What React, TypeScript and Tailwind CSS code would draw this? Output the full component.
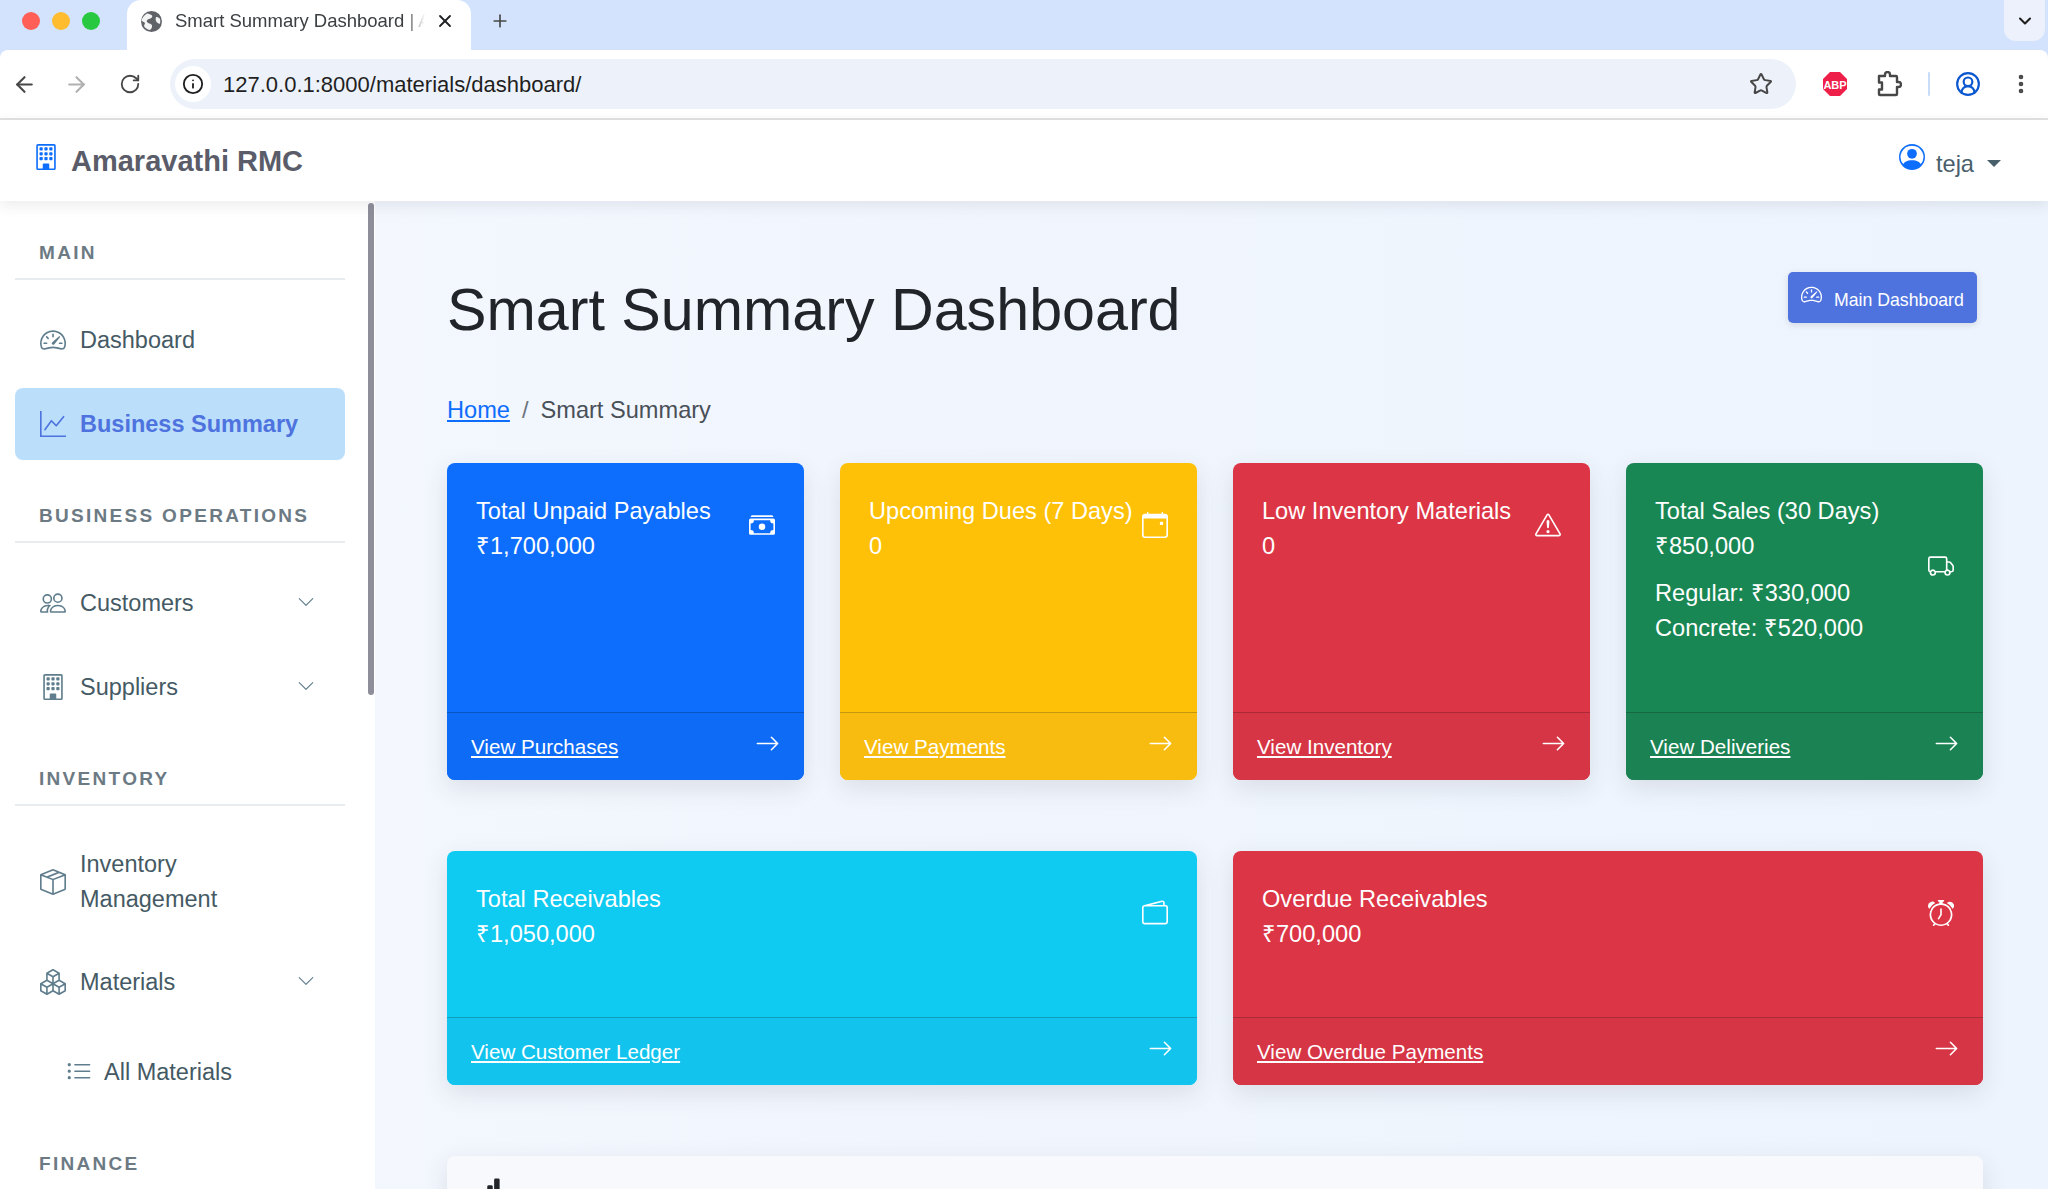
import type { ReactNode } from "react"
import { ArrowLeft, ArrowRight, ChevronDown, CircleUserRound, EllipsisVertical, Info, Plus, RotateCw, Star, X } from "lucide-react"
import {
  BsAlarm,
  BsArrowRight,
  BsBarChartFill,
  BsBoxSeam,
  BsBoxes,
  BsBuilding,
  BsCalendarEvent,
  BsCashStack,
  BsChevronDown,
  BsExclamationTriangle,
  BsGraphUp,
  BsListUl,
  BsPeople,
  BsPersonCircle,
  BsSpeedometer2,
  BsTruck,
  BsWallet2,
} from "react-icons/bs"

function BrowserChrome() {
  return (
    <div className="shrink-0 bg-[#d3e3fd]">
      {/* tab strip */}
      <div className="flex h-[50px] items-start">
        <div className="flex h-[50px] w-[127px] shrink-0 items-center gap-[12px] pb-[8px] pl-[22px]">
          <span className="h-[18px] w-[18px] rounded-full bg-[#ff5f57]" />
          <span className="h-[18px] w-[18px] rounded-full bg-[#febc2e]" />
          <span className="h-[18px] w-[18px] rounded-full bg-[#28c840]" />
        </div>
        <div className="flex h-[50px] w-[344px] shrink-0 items-center rounded-t-[14px] bg-white pb-[8px] pl-[14px] pr-[16px]">
          <svg className="h-[21px] w-[21px] shrink-0" viewBox="0 0 21 21">
            <circle cx="10.5" cy="10.5" r="10.5" fill="#5f6368" />
            <path d="M6 2.500c2 .5 4 .5 5 2s-1 3-3 3.500-3 2-1.500 3.500 4 1 4.500 3-1 3.500-2 4.500c-3-.5-5-2-6-4l1-3c-1-1-2.500-2-3.500-2C1 7 3 4 6 2.500z" fill="#fff" fillOpacity="0.92" />
            <path d="M15 6c1.500 0 3 .5 4 2 .5 1.500.5 3 0 4.500-1 .5-2 0-3-1s-2-3-1-5.500z" fill="#fff" fillOpacity="0.92" />
          </svg>
          <span className="ml-[13px] w-[250px] overflow-hidden whitespace-nowrap text-[18.5px] text-[#3c4043] [mask-image:linear-gradient(to_right,#000_92%,transparent_100%)]">Smart Summary Dashboard | Amaravathi</span>
          <X className="ml-auto h-[20px] w-[20px] shrink-0 text-[#202124]" strokeWidth={2.2} />
        </div>
        <div className="flex h-[42px] w-[58px] shrink-0 items-center justify-center">
          <Plus className="h-[20px] w-[20px] text-[#474747]" strokeWidth={2} />
        </div>
        <div className="ml-auto mr-[3px] flex h-[41px] w-[41px] items-center justify-center rounded-b-[12px] bg-[#ecf1fb]">
          <ChevronDown className="h-[20px] w-[20px] text-[#1f1f1f]" strokeWidth={2.5} />
        </div>
      </div>
      {/* toolbar */}
      <div className="flex h-[70px] items-center rounded-t-[8px] border-b-2 border-[#e2e2e2] bg-white">
        <div className="flex w-[170px] shrink-0 items-center pl-[12px] text-[#474747]">
          <ArrowLeft className="h-[25px] w-[25px]" strokeWidth={2} />
          <ArrowRight className="ml-[27px] h-[25px] w-[25px] text-[#b0b0b0]" strokeWidth={2} />
          <RotateCw className="ml-[30px] h-[22px] w-[22px]" strokeWidth={2} />
        </div>
        <div className="flex h-[50px] w-[1626px] shrink-0 items-center rounded-full bg-[#edf2fa] pl-[5px]">
          <span className="flex h-[36px] w-[36px] items-center justify-center rounded-full bg-white">
            <Info className="h-[22px] w-[22px] text-[#1f1f1f]" strokeWidth={2} />
          </span>
          <span className="ml-[12px] mt-[1px] text-[22px] text-[#1f1f1f]">127.0.0.1:8000/materials/dashboard/</span>
          <Star className="ml-auto mr-[23px] h-[24px] w-[24px] text-[#474747]" strokeWidth={2} />
        </div>
        <svg className="ml-[26px] h-[26px] w-[26px] shrink-0" viewBox="0 0 26 26">
          <polygon points="8,1 18,1 25,8 25,18 18,25 8,25 1,18 1,8" fill="#ee2049" />
          <text x="13" y="17.5" textAnchor="middle" fontSize="11" fontWeight="700" fill="#fff" fontFamily="Liberation Sans">ABP</text>
        </svg>
        <svg className="ml-[28px] h-[26px] w-[26px] shrink-0" viewBox="0 0 26 26" fill="none" stroke="#474747" strokeWidth="2.4" strokeLinejoin="round">
          <path d="M3 5h6V3.500a2.500 2.500 0 0 1 5 0V5h6a1 1 0 0 1 1 1v5h1.500a2.500 2.500 0 0 1 0 5H21v7a1 1 0 0 1-1 1H4a1 1 0 0 1-1-1v-4.500h3v-7H3z" />
        </svg>
        <span className="ml-[26px] h-[24px] w-[2px] shrink-0 rounded bg-[#c9dcf9]" />
        <CircleUserRound className="ml-[25px] h-[26px] w-[26px] shrink-0 text-[#0b57d0]" strokeWidth={2} />
        <EllipsisVertical className="ml-[28px] h-[24px] w-[24px] shrink-0 text-[#474747]" strokeWidth={2.6} />
      </div>
    </div>
  )
}

function Navbar() {
  return (
    <div className="relative z-10 flex h-[81px] shrink-0 items-center bg-white pl-[33px] pr-[47px] shadow-[0_4px_14px_rgba(58,59,69,0.1)]">
      <BsBuilding className="mb-[7px] text-[26px] text-[#0d6efd]" />
      <span className="ml-[12px] mt-[2px] text-[29px] font-bold text-[#5a5c69]">Amaravathi RMC</span>
      <BsPersonCircle className="mb-[7px] ml-auto text-[26px] text-[#0d6efd]" />
      <span className="ml-[11px] mt-[9px] text-[23.6px] text-[#495f6c]">teja</span>
      <span className="ml-[13px] mt-[5px] h-0 w-0 border-x-[7px] border-t-[7px] border-x-transparent border-t-[#495f6c]" />
    </div>
  )
}

function SectionLabel({ children, className }: { children: ReactNode; className: string }) {
  return (
    <div className={`${className} border-b-2 border-[#e9ecef] pb-[11px] pl-[24px] pt-[1px] text-[19px] font-bold leading-[28px] tracking-[2.3px] text-[#6c7a84]`}>
      {children}
    </div>
  )
}

function NavItem({ icon, label, chevron, active }: { icon: ReactNode; label: ReactNode; chevron?: boolean; active?: boolean }) {
  return (
    <div
      className={`flex min-h-[72px] items-center rounded-[8px] py-[18px] pl-[25px] pr-[30px] text-[23.5px] leading-[35px] ${
        active ? "bg-[#bbdefb] font-bold text-[#4e73df]" : "text-[#455a64]"
      }`}
    >
      <span className={`shrink-0 text-[26px] ${active ? "text-[#4e73df]" : "text-[#5f7d8c]"}`}>{icon}</span>
      <span className="ml-[14px]">{label}</span>
      {chevron && <BsChevronDown className="mb-[2px] ml-auto text-[18px] text-[#5f7d8c]" />}
    </div>
  )
}

function Sidebar() {
  return (
    <div className="flex w-[375px] shrink-0 overflow-hidden bg-white">
      <div className="w-[368px] shrink-0 pl-[15px] pr-[23px] pt-[37px]">
        <SectionLabel className="">MAIN</SectionLabel>
        <div className="mt-[24px] flex flex-col gap-[12px]">
          <NavItem icon={<BsSpeedometer2 />} label="Dashboard" />
          <NavItem icon={<BsGraphUp />} label="Business Summary" active />
        </div>
        <SectionLabel className="mt-[41px]">BUSINESS OPERATIONS</SectionLabel>
        <div className="mt-[24px] flex flex-col gap-[12px]">
          <NavItem icon={<BsPeople />} label="Customers" chevron />
          <NavItem icon={<BsBuilding />} label="Suppliers" chevron />
        </div>
        <SectionLabel className="mt-[41px]">INVENTORY</SectionLabel>
        <div className="mt-[23px] flex flex-col gap-[11px]">
          <NavItem icon={<BsBoxSeam />} label={<>Inventory<br />Management</>} />
          <NavItem icon={<BsBoxes />} label="Materials" chevron />
        </div>
        <div className="mt-[19px] flex h-[72px] items-center pl-[51px] text-[23.5px] text-[#455a64]">
          <BsListUl className="mb-[2px] text-[26px] text-[#5f7d8c]" />
          <span className="ml-[12px]">All Materials</span>
        </div>
        <SectionLabel className="mt-[40px]">FINANCE</SectionLabel>
      </div>
      <div className="mt-[2px] h-[492px] w-[6px] shrink-0 rounded-full bg-[#8e8e9b]" />
    </div>
  )
}

type CardProps = {
  color: string
  footer: string
  bodyHeight: string
  title: string
  value: string
  icon: ReactNode
  link: string
  extra?: string[]
}

function StatCard({ color, footer, bodyHeight, title, value, icon, link, extra }: CardProps) {
  return (
    <div className={`${color} overflow-hidden rounded-[8px] text-white shadow-[0_8px_24px_rgba(58,59,69,0.12)]`}>
      <div className={`${bodyHeight} flex items-start px-[29px] pt-[31px] text-[23.6px] leading-[35px]`}>
        <div className="flex w-full items-center justify-between">
          <div className="whitespace-nowrap">
            <div>{title}</div>
            <div>{value}</div>
            {extra && (
              <div className="mt-[12px]">
                {extra.map((line) => (
                  <div key={line}>{line}</div>
                ))}
              </div>
            )}
          </div>
          <span className="mb-[8px] text-[26px]">{icon}</span>
        </div>
      </div>
      <div className={`${footer} flex h-[68px] items-center justify-between border-t border-black/20 pl-[24px] pr-[24px] text-[20.6px]`}>
        <span className="mt-[2px] underline underline-offset-[2px]">{link}</span>
        <BsArrowRight className="mb-[6px] text-[25px]" />
      </div>
    </div>
  )
}

export default function App() {
  return (
    <div className="flex h-[1189px] flex-col overflow-hidden bg-linear-to-r from-[#f4f7fe] to-[#edf4fd] font-['Liberation_Sans',Arial,sans-serif]">
      <BrowserChrome />
      <Navbar />
      <div className="flex min-h-0 flex-1">
        <Sidebar />
        <div className="min-w-0 flex-1 pl-[72px] pr-[65px] pt-[71px]">
          <div className="flex items-start justify-between pr-[6px]">
            <h1 className="mt-[3px] text-[59.2px] font-normal leading-[70px] text-[#212529]">Smart Summary Dashboard</h1>
            <div className="flex h-[51px] w-[189px] items-center rounded-[5px] bg-[#4e73df] pl-[13px] text-[17.7px] text-white shadow-[0_2px_6px_rgba(58,59,69,0.15)]">
              <BsSpeedometer2 className="mb-[6px] text-[21px]" />
              <span className="ml-[12px] mt-[6px]">Main Dashboard</span>
            </div>
          </div>
          <div className="mt-[48px] flex text-[23.6px] leading-[35px]">
            <span className="text-[#0d6efd] underline">Home</span>
            <span className="mx-[12px] text-[#6c757d]">/</span>
            <span className="text-[#495057]">Smart Summary</span>
          </div>
          <div className="mt-[35px] grid grid-cols-4 gap-[36px]">
            <StatCard color="bg-[#0d6efd]" footer="bg-[#0d6bf5]" bodyHeight="h-[249px]" title="Total Unpaid Payables" value="₹1,700,000" icon={<BsCashStack />} link="View Purchases" />
            <StatCard color="bg-[#ffc107]" footer="bg-[#f8bc10]" bodyHeight="h-[249px]" title="Upcoming Dues (7 Days)" value="0" icon={<BsCalendarEvent />} link="View Payments" />
            <StatCard color="bg-[#dc3545]" footer="bg-[#d63545]" bodyHeight="h-[249px]" title="Low Inventory Materials" value="0" icon={<BsExclamationTriangle />} link="View Inventory" />
            <StatCard color="bg-[#198754]" footer="bg-[#1b8353]" bodyHeight="h-[249px]" title="Total Sales (30 Days)" value="₹850,000" icon={<BsTruck />} link="View Deliveries" extra={["Regular: ₹330,000", "Concrete: ₹520,000"]} />
          </div>
          <div className="mt-[71px] grid grid-cols-2 gap-[36px]">
            <StatCard color="bg-[#0fcaf1]" footer="bg-[#12c4ed]" bodyHeight="h-[166px]" title="Total Receivables" value="₹1,050,000" icon={<BsWallet2 />} link="View Customer Ledger" />
            <StatCard color="bg-[#dc3545]" footer="bg-[#d63545]" bodyHeight="h-[166px]" title="Overdue Receivables" value="₹700,000" icon={<BsAlarm />} link="View Overdue Payments" />
          </div>
          <div className="mt-[71px] h-[200px] rounded-[8px] bg-[#f8f9fc] pl-[32px] pt-[21px] text-[#212529] shadow-[0_8px_24px_rgba(58,59,69,0.12)]">
            <BsBarChartFill className="text-[22px]" />
          </div>
        </div>
      </div>
    </div>
  )
}
